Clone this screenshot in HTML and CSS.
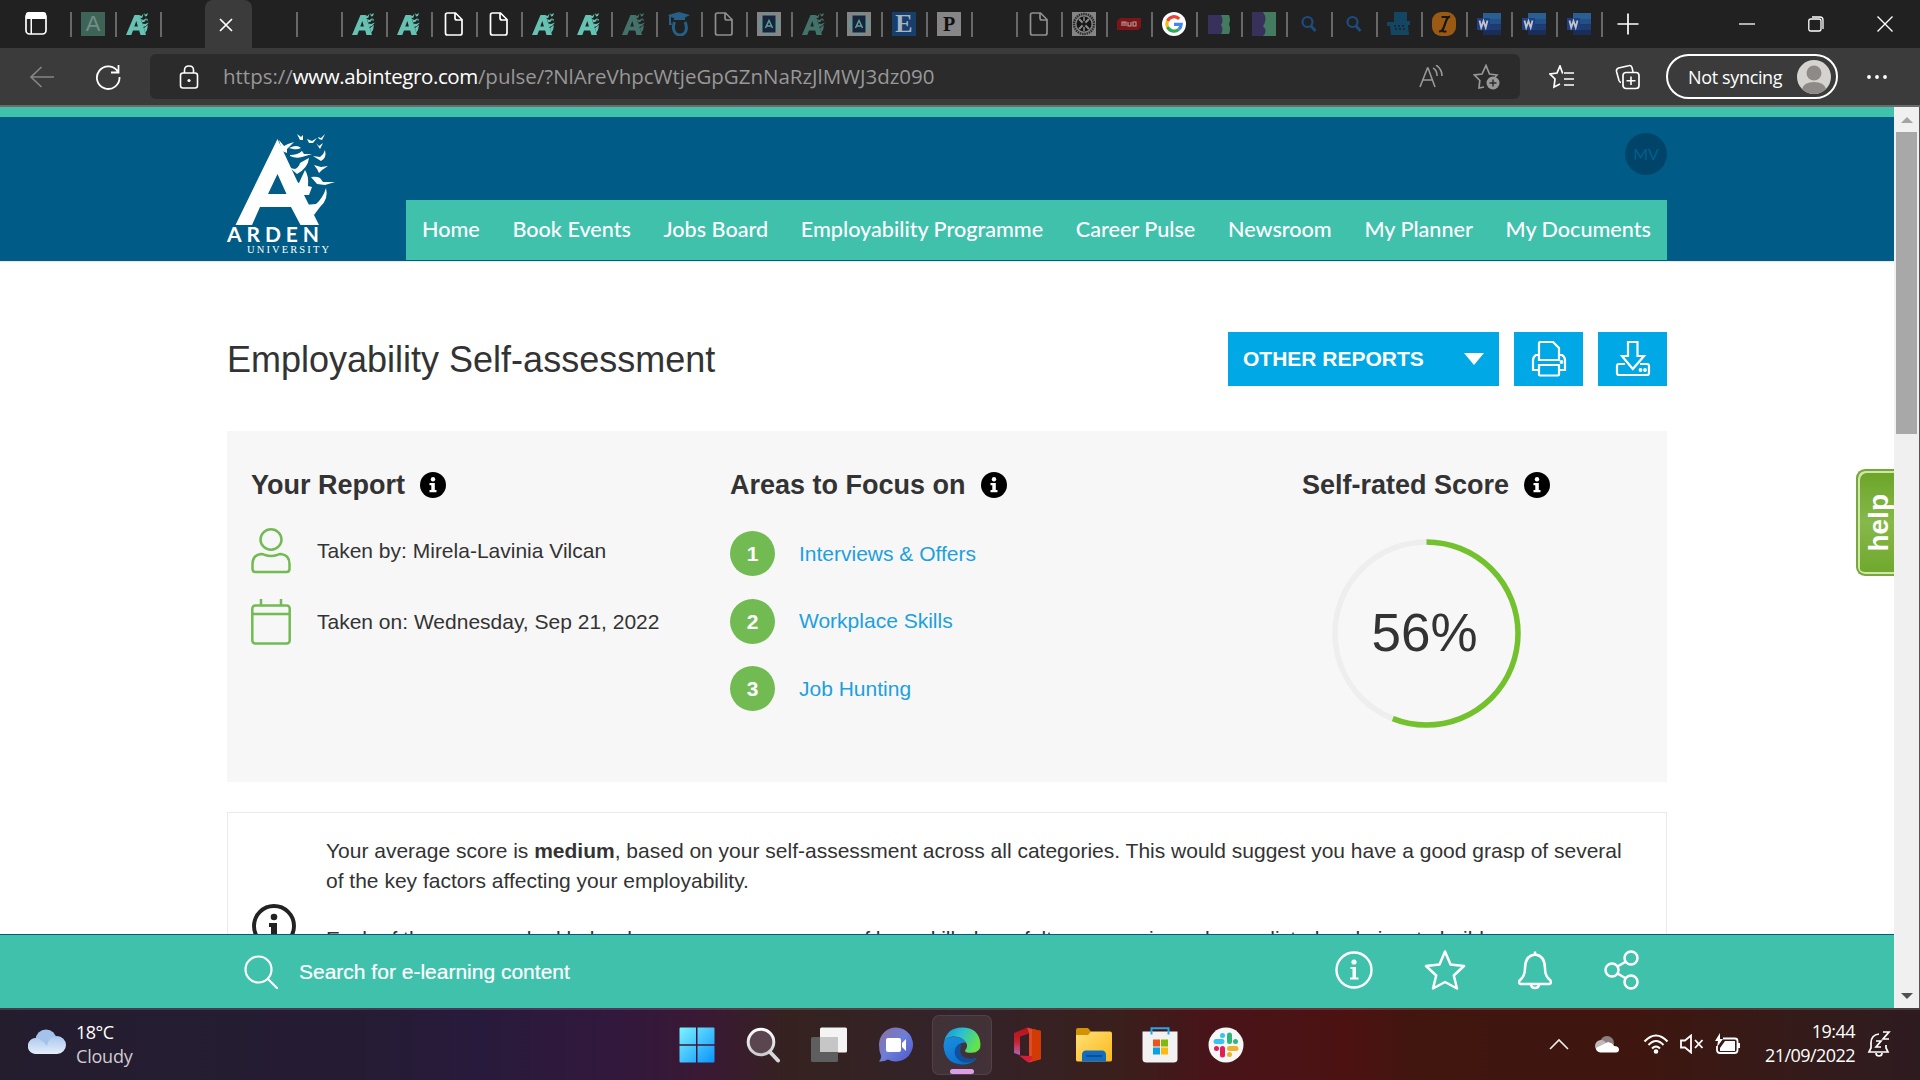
FILE: index.html
```html
<!DOCTYPE html>
<html lang="en">
<head>
<meta charset="utf-8">
<title>Employability Self-assessment</title>
<link rel="stylesheet" href="styles.css">
</head>
<body>
<svg class="defs" aria-hidden="true">
  <defs>
    <linearGradient id="gWin" x1="0" y1="0" x2="1" y2="1"><stop offset="0" stop-color="#7df3ff"/><stop offset="1" stop-color="#0a94ff"/></linearGradient>
    <linearGradient id="gLens" x1="0" y1="0" x2="0" y2="1"><stop offset="0" stop-color="#fff"/><stop offset="1" stop-color="#c9ccd0"/></linearGradient>
    <linearGradient id="gChat" x1="0" y1="0" x2="1" y2="1"><stop offset="0" stop-color="#8f6f9d"/><stop offset=".5" stop-color="#6c7fd8"/><stop offset="1" stop-color="#4f56d0"/></linearGradient>
    <linearGradient id="gEdge" x1="0" y1="0" x2="1" y2=".4"><stop offset="0" stop-color="#1592d8"/><stop offset=".5" stop-color="#2cc0d0"/><stop offset="1" stop-color="#62e34c"/></linearGradient>
    <linearGradient id="gEdge2" x1="0" y1="0" x2=".6" y2="1"><stop offset="0" stop-color="#1a8fdd"/><stop offset="1" stop-color="#0a6fd0"/></linearGradient>
    <linearGradient id="gOff" x1="0" y1="0" x2="0" y2="1"><stop offset="0" stop-color="#b5121c"/><stop offset=".5" stop-color="#c2222e"/><stop offset="1" stop-color="#b264b4"/></linearGradient>
    <linearGradient id="gFold" x1="0" y1="0" x2="1" y2="1"><stop offset="0" stop-color="#ffe07a"/><stop offset="1" stop-color="#fbb917"/></linearGradient>
    <linearGradient id="gCloud" x1="0" y1="0" x2="0" y2="1"><stop offset="0" stop-color="#a9c8ee"/><stop offset="1" stop-color="#e6edf8"/></linearGradient>
    <symbol id="arden" viewBox="0 0 24 24"><path d="M0 23 8.500 3h5L20 23h-5.500l-1.300-4.500H7L5.300 23zM8.300 14.500h3.600L10.300 9z" fill-rule="evenodd"/><path d="M13 3l2.500 1 2-2.500-1 4-2 1zm5-2 1.500 1.500L22 1l-1 3-2 .5zM15 7l2.500 1 3-2-1.500 3.500-3 1zM16 11.500l3 .5 4-1.500-3 3.500-3 1zM18 16l4-3-1 5-2 3zM20 6.500l2 1-1 2z"/></symbol>
    <symbol id="doc" viewBox="0 0 24 24"><path d="M5.500 1h8L20 7.500V21q0 2-2 2H5.500q-2 0-2-2V3q0-2 2-2zM13 1.500V6q0 2 2 2h4.500" fill="none" stroke="currentColor" stroke-width="1.700"/></symbol>
    <symbol id="book" viewBox="0 0 24 24"><path fill="#858585" d="M0 0h24v24H0z"/><circle cx="12" cy="12" r="10.500" fill="#6c9492"/><path fill="#17243c" d="M5.500 3.500h13v17h-13z"/><path d="M8.500 16l3.500-7.500 3.500 7.500M9.500 14h5" stroke="#5c9f98" stroke-width="1.500" fill="none"/></symbol>
    <symbol id="mag" viewBox="0 0 24 24"><circle cx="10.500" cy="10" r="5" fill="none" stroke="#1c4d80" stroke-width="2.200"/><path d="M14 14l4.500 5" stroke="#1c4d80" stroke-width="2.800"/></symbol>
    <symbol id="word" viewBox="0 0 24 24"><path fill="#2a5f92" d="M6 1h18v6H6z"/><path fill="#23508a" d="M6 7h18v5.500H6z"/><path fill="#1d3d72" d="M6 12.500h18V18H6z"/><path fill="#1a2d5a" d="M6 18h18v5H6z"/><path fill="#1c3f86" d="M0 6h13v12H0z"/><path d="M2.500 8.500l1.700 7L6.500 9l2.200 6.500 1.800-7" stroke="#c3c3c3" stroke-width="1.800" fill="none"/></symbol>
    <symbol id="info" viewBox="0 0 26 26"><circle cx="13" cy="13" r="13" fill="#000"/><circle cx="13" cy="7.300" r="2.200" fill="#fff"/><path fill="#fff" d="M9.500 11h5.300v7h1.700v2.200h-7V18h1.800v-4.800H9.500z"/></symbol>
  </defs>
</svg>

<header class="tabs">
  <div class="tab-menu"><svg width="24" height="30" viewBox="0 0 24 30"><rect x="2" y="4" width="20" height="21" rx="3.500" fill="none" stroke="#fff" stroke-width="1.700"/><path fill="#fff" d="M2 5q0-2 3-2h14q3 0 3 2v5H2zM6.500 9h1.500v16H6.500z"/></svg></div>
  <div class="tab"><span class="fav sq-a">A</span></div>
  <div class="tab"><svg class="fav teal"><use href="#arden"/></svg></div>
  <div class="tab"></div>
  <div class="tab active"><svg width="14" height="14" viewBox="0 0 14 14"><path d="M1 1l12 12M13 1L1 13" stroke="#fff" stroke-width="1.700"/></svg></div>
  <div class="tab bare"></div>
  <div class="tab"></div>
  <div class="tab"><svg class="fav teal"><use href="#arden"/></svg></div>
  <div class="tab"><svg class="fav teal"><use href="#arden"/></svg></div>
  <div class="tab"><svg class="fav white"><use href="#doc"/></svg></div>
  <div class="tab"><svg class="fav white"><use href="#doc"/></svg></div>
  <div class="tab"><svg class="fav teal"><use href="#arden"/></svg></div>
  <div class="tab"><svg class="fav teal"><use href="#arden"/></svg></div>
  <div class="tab"><svg class="fav teal dim"><use href="#arden"/></svg></div>
  <div class="tab"><svg class="fav" viewBox="0 0 24 24"><path fill="#275f86" d="M1 3l11-3 11 3-5 2.500V8H7V6L4 5v5l1 3H2V4z"/><path d="M7.500 10C5 16 7 23 13 23s8-7 5-13" fill="none" stroke="#245f88" stroke-width="3"/></svg></div>
  <div class="tab"><svg class="fav grey"><use href="#doc"/></svg></div>
  <div class="tab"><svg class="fav"><use href="#book"/></svg></div>
  <div class="tab"><svg class="fav teal dim"><use href="#arden"/></svg></div>
  <div class="tab"><svg class="fav"><use href="#book"/></svg></div>
  <div class="tab"><span class="fav sq-e">E</span></div>
  <div class="tab"><span class="fav sq-p">P</span></div>
  <div class="tab"></div>
  <div class="tab"><svg class="fav grey"><use href="#doc"/></svg></div>
  <div class="tab"><svg class="fav" viewBox="0 0 24 24"><path fill="#858585" d="M0 0h24v24H0z"/><circle cx="12" cy="12" r="10" fill="none" stroke="#2a2a2a" stroke-width="2.400" stroke-dasharray="1.500 .8"/><circle cx="12" cy="12" r="7.500" fill="#151515"/><path d="M7 7l10 10M17 7L7 17" stroke="#8a8a8a" stroke-width="2"/><path d="M12 5v4M12 15v4" stroke="#8a8a8a" stroke-width="1.500"/><circle cx="12" cy="12" r="2" fill="#151515"/></svg></div>
  <div class="tab"><svg class="fav" viewBox="0 0 24 24"><path fill="#7d1518" d="M3 6h21v9l-3 3H0V9z"/><path d="M5 14V10h4v4M7 10v4M11 10v4h3v-4M16 10h3v4h-3z" fill="none" stroke="#b0a0a0" stroke-width="1.100"/></svg></div>
  <div class="tab"><svg class="fav" viewBox="0 0 24 24"><circle cx="12" cy="12" r="12" fill="#fff"/><g fill="none" stroke-width="3.200"><path stroke="#ea4335" d="M5.500 9a7.200 7.200 0 0 1 11.700-2.200"/><path stroke="#fbbc05" d="M5.500 15a7.200 7.200 0 0 1 0-6"/><path stroke="#34a853" d="M16.800 17.400A7.200 7.200 0 0 1 5.500 15"/><path stroke="#4285f4" d="M12 12.300h7.200a7.200 7.200 0 0 1-2.400 5.100"/></g></svg></div>
  <div class="tab"><svg class="fav" viewBox="0 0 24 24"><path fill="#38315c" d="M1 3h15v19H1z"/><path fill="#437a60" d="M14 3h8q2 5 0 9 2 5 0 10h-8q3-5 0-9 3-4 0-10z"/></svg></div>
  <div class="tab"><svg class="fav" viewBox="0 0 24 24"><path fill="#38315c" d="M0 0h14v24H0z"/><path fill="#437a60" d="M11 0h13v24H11q5-5 0-10 5-7 0-14z"/></svg></div>
  <div class="tab"><svg class="fav"><use href="#mag"/></svg></div>
  <div class="tab"><svg class="fav"><use href="#mag"/></svg></div>
  <div class="tab"><svg class="fav" viewBox="0 0 24 24"><path fill="#134663" d="M7 0h13v9h3v4h-2l1 10H4l-1-9H0v-4h7z"/><path stroke="#202020" stroke-width="1.600" stroke-dasharray="2 2" d="M7 14h12M8 17h10"/></svg></div>
  <div class="tab"><svg class="fav" viewBox="0 0 24 24"><rect width="24" height="24" rx="9" fill="#9a5a14"/><path d="M7 19.500q3.500 0 4.500-3.500l3-8q1-3 3.500-3.500M9.500 5h6M10.500 19.500h4" fill="none" stroke="#161616" stroke-width="2.200"/></svg></div>
  <div class="tab"><svg class="fav"><use href="#word"/></svg></div>
  <div class="tab"><svg class="fav"><use href="#word"/></svg></div>
  <div class="tab"><svg class="fav"><use href="#word"/></svg></div>
  <div class="tab new-tab"><svg width="22" height="22" viewBox="0 0 22 22"><path d="M11 .5v21M.5 11h21" stroke="#fff" stroke-width="1.700"/></svg></div>
  <div class="win-buttons">
    <svg width="16" height="16" viewBox="0 0 16 16"><path d="M0 8h16" stroke="#fff" stroke-width="1.300"/></svg>
    <svg width="16" height="16" viewBox="0 0 16 16"><path d="M.8 5q0-2 2-2H11q2 0 2 2v8q0 2-2 2H2.800q-2 0-2-2zM4 1h8q3 0 3 3v9" fill="none" stroke="#fff" stroke-width="1.300"/></svg>
    <svg width="16" height="16" viewBox="0 0 16 16"><path d="M.5.5l15 15M15.500.5l-15 15" stroke="#fff" stroke-width="1.400"/></svg>
  </div>
</header>

<div class="toolbar">
  <svg class="back" width="26" height="24" viewBox="0 0 26 24"><path d="M25 12H2M12.500 2L2 12l10.500 10" fill="none" stroke="#858585" stroke-width="1.700"/></svg>
  <svg class="reload" width="26" height="26" viewBox="0 0 26 26"><path d="M23 8A11.300 11.300 0 1 0 24.500 13M23.500 1v7.500H16" fill="none" stroke="#fff" stroke-width="1.800"/></svg>
  <div class="address">
    <svg width="20" height="24" viewBox="0 0 20 24"><rect x="1.500" y="8" width="17" height="15" rx="2.500" fill="none" stroke="#fff" stroke-width="1.600"/><path d="M5.500 8V5q0-4 4.500-4t4.500 4v3" fill="none" stroke="#fff" stroke-width="1.600"/><circle cx="10" cy="15.500" r="1.600" fill="#fff"/></svg>
    <div class="url">https://<b>www.abintegro.com</b><span class="query">/pulse/?NlAreVhpcWtjeGpGZnNaRzJlMWJ3dz090</span></div>
    <svg class="read" width="26" height="24" viewBox="0 0 26 24"><path d="M1 22L8.500 3h.5l7 19M4 15h10M14 3q4 2 4 8M17 0q6 4 6 11" fill="none" stroke="#989898" stroke-width="1.600"/></svg>
    <svg width="28" height="26" viewBox="0 0 28 26"><path d="M11 23l-5 1 .8-7.500L1.500 11l7.500-1L13 1.500 16.500 10l7.500 1-2 2" fill="none" stroke="#989898" stroke-width="1.700"/><circle cx="20" cy="19" r="6.500" fill="#989898"/><path d="M20 15.500v7M16.500 19h7" stroke="#2b2b2b" stroke-width="1.400"/></svg>
  </div>
  <svg class="favs" width="26" height="24" viewBox="0 0 26 24"><path d="M14 8h-.5L11 1 8 8l-7 1 5 5-1 8 6-3M15 8h10M15 14h10M15 20h10" fill="none" stroke="#fff" stroke-width="1.700"/></svg>
  <svg class="coll" width="26" height="26" viewBox="0 0 26 26"><rect x="8" y="8.500" width="16" height="16" rx="3" fill="none" stroke="#fff" stroke-width="1.700"/><path d="M16 12.500v8.500M11.500 16.700h9M18 8l-1-4.500Q16 1 13.500 1.700L3.500 4Q1 5 1.500 7.500l2.500 9q.5 1.500 2 2" fill="none" stroke="#fff" stroke-width="1.600"/></svg>
  <div class="profile"><span>Not syncing</span><svg width="34" height="34" viewBox="0 0 34 34"><circle cx="17" cy="17" r="17" fill="#d5d3d0"/><circle cx="17" cy="13" r="7.500" fill="#8e8a87"/><path fill="#8e8a87" d="M5 29q2-7 12-7t12 7q-5 5-12 5T5 29z"/></svg></div>
  <svg class="dots" width="22" height="6" viewBox="0 0 22 6" fill="#fff"><circle cx="3" cy="3" r="1.900"/><circle cx="11" cy="3" r="1.900"/><circle cx="19" cy="3" r="1.900"/></svg>
</div>

<div class="viewport">
  <div class="page">
    <div class="masthead">
      <div class="masthead-inner">
        <svg class="logo" width="130" height="135" viewBox="0 0 130 135" fill="#fff">
          <path fill-rule="evenodd" d="M62.500 14L20.500 100H37l8-18h31l9.500 18h18.500L84 60zM62.500 49L53 69h18.500z"/>
          <path d="M64 15l5 6 4-2 6-2-7 7 0 4-5-2zM74 23q8-4 12 0-4 2-8 1zM82 9l4 3 2-2 0 5-3 0zM92 14l5 2 5-3-4 5-4 0zM103 12l3 1 4-4-3 6-3-1zM101 18l3 3 4-3-3 6zM75 30q8 0 12-4l2 3 8 0-10 3q-6 2-12-1zM110 25q2 8-4 11l-8-5 7 1q4-3 5-7zM94 33q-1 10-12 16l-7-6 5 1q4-2 5-6 5-3 9-5zM99 40l7 2 7-1-6 4-3 3-2-4zM90 45q4 6 3 16l4 1-3 8-9 0-6-14 5 2zM96 52q6-1 9 1l3 4 12 0-10 3-8-1zM111 63q3 11-6 19l-6 8-9-10 11-1q7-6 10-16z"/>
          <text x="12" y="117" class="logo-a" textLength="92">ARDEN</text>
          <text x="32" y="128" class="logo-u" textLength="82">UNIVERSITY</text>
        </svg>
        <div class="masthead-right">
          <div class="initials">MV</div>
          <nav>
            <a>Home</a><a>Book Events</a><a>Jobs Board</a><a>Employability Programme</a><a>Career Pulse</a><a>Newsroom</a><a>My Planner</a><a>My Documents</a>
          </nav>
        </div>
      </div>
    </div>
    <main>
      <div class="title-row">
        <h1>Employability Self-assessment</h1>
        <div class="btn reports">OTHER REPORTS<i class="caret"></i></div>
        <div class="btn"><svg width="36" height="36" viewBox="0 0 36 36" fill="none" stroke="#fff" stroke-width="2.200"><path d="M8 19V2.500Q8 1 9.500 1H22l6 6v12zM8 14H5q-3 2-3 5v10h6M28 14h3q3 2 3 5v10h-6M8 24h20v9.500q0 1-1 1H9q-1 0-1-1z"/><circle cx="30.500" cy="21" r=".8"/></svg></div>
        <div class="btn"><svg width="36" height="36" viewBox="0 0 36 36" fill="none" stroke="#fff" stroke-width="2.200"><path d="M13 1h9.500v14h6.500L17.800 28 7 15h6zM10 23H4q-2 0-2 2v7q0 2 2 2h28q2 0 2-2v-7q0-2-2-2h-7"/><circle cx="25.500" cy="29" r=".8"/><circle cx="30" cy="29" r=".8"/></svg></div>
      </div>
      <section class="summary">
        <div class="col-report">
          <h2>Your Report <svg width="26" height="26"><use href="#info"/></svg></h2>
          <div class="fact"><svg width="40" height="46" viewBox="0 0 40 46" fill="none" stroke="#72bb53" stroke-width="2.500"><ellipse cx="20" cy="11.500" rx="10.500" ry="10.200"/><path d="M1.500 41V36Q1.500 27 10 26q2 0 4 1 6 2 12 0 2-1 4-1 8.500 1 8.500 10v5q0 3-3 3h-31q-3 0-3-3z"/></svg><span>Taken by: Mirela-Lavinia Vilcan</span></div>
          <div class="fact"><svg width="40" height="46" viewBox="0 0 40 46" fill="none" stroke="#72bb53" stroke-width="2.500"><rect x="1.300" y="6.500" width="37.400" height="38" rx="3"/><path d="M1 15h38M10 0v6M30 0v6"/></svg><span class="low">Taken on: Wednesday, Sep 21, 2022</span></div>
        </div>
        <div class="col-focus">
          <h2>Areas to Focus on <svg width="26" height="26"><use href="#info"/></svg></h2>
          <div class="focus"><b>1</b><a>Interviews &amp; Offers</a></div>
          <div class="focus"><b>2</b><a>Workplace Skills</a></div>
          <div class="focus"><b>3</b><a>Job Hunting</a></div>
        </div>
        <div class="col-score">
          <h2>Self-rated Score <svg width="26" height="26"><use href="#info"/></svg></h2>
          <svg class="dial" width="190" height="190" viewBox="0 0 190 190"><circle cx="95.500" cy="95.500" r="91.500" fill="none" stroke="#eee" stroke-width="5.500"/><circle cx="95.500" cy="95.500" r="91.500" fill="none" stroke="#73c22d" stroke-width="5.500" pathLength="100" stroke-dasharray="56 100" transform="rotate(-90 95.500 95.500)"/><text x="93.500" y="113" text-anchor="middle">56%</text></svg>
        </div>
      </section>
      <section class="details">
        <svg class="ring" width="44" height="44" viewBox="0 0 44 44"><circle cx="22" cy="22" r="20" fill="none" stroke="#222" stroke-width="3.900"/><circle cx="22" cy="13" r="3.300" fill="#222"/><path fill="#222" d="M17 19h8v13h3v3H16v-3h3v-9h-2z"/></svg>
        <div class="prose">
          <p>Your average score is <b>medium</b>, based on your self-assessment across all categories. This would suggest you have a good grasp of several of the key factors affecting your employability.</p>
          <p>Each of the areas ranked below has your average score of how skilled you felt you were in each area listed and aims to build.</p>
        </div>
      </section>
    </main>
    <div class="searchbar">
      <svg width="34" height="34" viewBox="0 0 34 34" fill="none" stroke="#fff" stroke-width="2.200" stroke-linecap="round"><circle cx="14.500" cy="14.500" r="13"/><path d="M24 24l9 9"/></svg>
      <span>Search for e-learning content</span>
      <div class="actions">
        <svg width="38" height="38" viewBox="0 0 38 38"><circle cx="19" cy="19" r="17.500" fill="none" stroke="#fff" stroke-width="2.400"/><circle cx="19" cy="11" r="2.600" fill="#fff"/><path fill="#fff" d="M15.500 16h5.500v10.500h2.500V28.500h-8.500V26.500h2.500V18h-2z"/></svg>
        <svg width="42" height="40" viewBox="0 0 42 40"><path d="M21 1.500l5.500 13L40 16 29.800 25.500 33 38.500 21 32 9 38.500l3.200-13L2 16l13.500-1.500z" fill="none" stroke="#fff" stroke-width="2.500" stroke-linejoin="round"/></svg>
        <svg width="36" height="40" viewBox="0 0 36 40" fill="none" stroke="#fff" stroke-width="2.500"><path d="M18 4.500q-10 1-10 14 0 8-5.500 12-1 3 1 3.500h29q2-.5 1-3.500-5.500-4-5.500-12 0-13-10-14zM14 34q0 4 4 4t4-4M18 1.500V5"/></svg>
        <svg width="36" height="40" viewBox="0 0 36 40" fill="none" stroke="#fff" stroke-width="2.500"><circle cx="8" cy="20" r="6.500"/><circle cx="27" cy="8" r="6.500"/><circle cx="27" cy="32" r="6.500"/><path d="M13.500 16.500l8.500-5M13.500 23.500l8.500 5"/></svg>
      </div>
    </div>
    <div class="help"><span>help</span></div>
  </div>
  <div class="scrollbar">
    <i class="up"></i>
    <div class="thumb"></div>
    <i class="down"></i>
  </div>
</div>

<footer class="taskbar">
  <div class="weather">
    <svg width="38" height="26" viewBox="0 0 38 26"><circle cx="18" cy="11" r="10.500" fill="#a4c2ea"/><path fill="url(#gCloud)" d="M8 25a8 8 0 1 1 6-13q3 2 5 5 2-10 10-10a9 9 0 0 1 0 18z"/></svg>
    <div class="weather-text"><div>18°C</div><div class="sky">Cloudy</div></div>
  </div>
  <div class="apps">
    <div class="app"><svg width="36" height="36" viewBox="0 0 36 36"><path fill="url(#gWin)" d="M1.500.5H17V17.300H.5V1.500q0-1 1-1zM18.500.5h16q1 0 1 1v15.800h-17zM.5 18.700H17v16.800H1.500q-1 0-1-1zM18.500 18.700h17v15.800q0 1-1 1h-16z"/></svg></div>
    <div class="app"><svg width="36" height="36" viewBox="0 0 36 36"><circle cx="16" cy="15" r="12.800" fill="#5b4650" stroke="url(#gLens)" stroke-width="3"/><path d="M25 25l8 8.500" stroke="#d5d8da" stroke-width="4" stroke-linecap="round"/></svg></div>
    <div class="app"><svg width="36" height="36" viewBox="0 0 36 36"><rect x="9" y=".5" width="27" height="25" rx="1.500" fill="#f4f4f4"/><rect y="10" width="27" height="25" rx="1.500" fill="#5e5e5e"/><path fill="#c6c6c6" d="M9 10h18v15H9z"/></svg></div>
    <div class="app"><svg width="36" height="36" viewBox="0 0 36 36"><path fill="url(#gChat)" d="M18 .5a17 17 0 1 1-8 32q-4 2.500-9 2 2.500-2.500 2-6Q1 24 1 17.500A17 17 0 0 1 18 .5z"/><rect x="8" y="11" width="15" height="14" rx="2" fill="#fff"/><path fill="#fff" d="M24 16l4-4v12l-4-4z"/></svg></div>
    <div class="app current"><svg width="38" height="38" viewBox="0 0 36 36"><path fill="url(#gEdge2)" d="M.5 18Q0 10 9 9.500q9-.5 13 5l-5 1q-4 3-2 9 3 8 17 5-5 6-14 6Q2 35 .500 18z"/><path fill="#124f9c" d="M15 16q-6 5-3 12 5 8 15 5 3-1 5-4-9 3-14-2-3-4-.5-10z"/><path fill="url(#gEdge)" d="M1 14Q4 .5 18 .5q16 0 17.500 15.500Q36 24 27 24.500q-7 0-6-2.500 3-3 1-7-4-6.500-13-6Q3 10 1 14z"/></svg></div>
    <div class="app"><svg width="36" height="36" viewBox="0 0 36 36"><path fill="url(#gOff)" d="M17 .5L4 6v20l6 2V9.500l9-3z"/><path fill="#e2492a" d="M17 .5L31 4v28l-12 3.500V6.500z"/><path fill="#d23a06" d="M22 2l9 2v28l-9 2.500z"/><path fill="#d81e36" d="M9 28.500l10 .5h3v4l-4 2.500z"/></svg></div>
    <div class="app"><svg width="36" height="36" viewBox="0 0 36 36"><path fill="#d29204" d="M0 3q0-2 2-2h10l3 3.500V12H0z"/><path fill="url(#gFold)" d="M0 8h12l3-3.500h19q2 0 2 2V33q0 1.500-2 1.500H2Q0 34.500 0 33z"/><path fill="#106cc0" d="M6 34.500V28q0-4.500 4-4.500h16q4 0 4 4.500v6.500z"/><path fill="#0b4d97" d="M10 28h16v2H10z"/></svg></div>
    <div class="app"><svg width="36" height="36" viewBox="0 0 36 36"><path d="M9.500 7V1.300h17V7" fill="none" stroke="#27a5e8" stroke-width="2"/><path fill="#f2f2f2" d="M.5 4.500h35V32q0 3.500-4 3.500h-27q-4 0-4-3.500z"/><path fill="#f1511b" d="M11 12.500h7v7h-7z"/><path fill="#80bb0a" d="M19 12.500h7v7h-7z"/><path fill="#04a2e9" d="M11 20.500h7v7h-7z"/><path fill="#fdb813" d="M19 20.500h7v7h-7z"/><path d="M9.500 4v3.500M26.500 4v3.500" stroke="#27a5e8" stroke-width="2"/></svg></div>
    <div class="app"><svg width="36" height="36" viewBox="0 0 36 36"><circle cx="18" cy="18" r="17.500" fill="#f7f7f7"/><g stroke-width="5" stroke-linecap="round"><path stroke="#36c5f0" d="M8 14.500h6M14.500 8.500v0"/><path stroke="#2eb67d" d="M21.500 8v6.500M27.500 14.500v0"/><path stroke="#e01e5a" d="M14.500 21.500V28M8.500 21.500v0"/><path stroke="#ecb22e" d="M21.500 21.500H28M21.500 27.500v0"/></g></svg></div>
  </div>
  <div class="tray">
    <svg class="chev" width="20" height="12" viewBox="0 0 20 12"><path d="M1 11l9-9 9 9" fill="none" stroke="#eee" stroke-width="1.600"/></svg>
    <svg class="cloud" width="26" height="18" viewBox="0 0 26 18"><circle cx="13" cy="8" r="7" fill="#8d7f7d"/><circle cx="7" cy="11" r="6" fill="#c2bab9"/><path fill="#fff" d="M6 17.500q-4-1-4-4.500l12-6q5 1 6 4 5 0 5 3.500T21 17.500z"/></svg>
    <svg class="wifi" width="26" height="20" viewBox="0 0 26 20" fill="none" stroke="#fff" stroke-width="2"><path d="M1.500 7.500q11.500-12 23 0M5.500 11q7.500-8 15 0M9 14.500q4-4 8 0"/><circle cx="13" cy="17.500" r="1.300" fill="#fff"/></svg>
    <svg class="snd" width="24" height="20" viewBox="0 0 24 20" fill="none" stroke="#fff" stroke-width="1.800"><path d="M1 6.500h4L11 1.500v17l-6-5H1zM15 6l7.500 8M22.500 6L15 14"/></svg>
    <svg class="bat" width="26" height="22" viewBox="0 0 26 22"><path d="M8 5.500h12q2.500 0 2.500 2.500v9q0 3-3 3H5q-3 0-3-3v-4" fill="none" stroke="#fff" stroke-width="1.800"/><path fill="#fff" d="M23 10h2v5h-2zM10 8h10v10H5v-3zM5 0L0 8h3l-1 6 6-8H5z"/></svg>
    <div class="clock"><div>19:44</div><div>21/09/2022</div></div>
    <svg class="dnd" width="24" height="26" viewBox="0 0 24 26" fill="none" stroke="#fff" stroke-width="1.700"><path d="M12 3Q4 4 4 12v5l-2 4h19l-2-4v-3M9 22q0 3 3 3t3-3M9 10h5l-5 6h5M16 1h6l-6 7h6"/></svg>
  </div>
</footer>
</body>
</html>
```
FILE: styles.css
```css
* { box-sizing: border-box; }
body {
  margin: 0;
  width: 1920px;
  height: 1080px;
  overflow: hidden;
  display: flex;
  flex-direction: column;
  font-family: "Liberation Sans", Arial, sans-serif;
  font-size: 21px;
  line-height: 30px;
  color: #333;
  background: #fff;
}
svg { display: block; flex: none; }
.defs { position: absolute; width: 0; height: 0; }

/* tab strip */
.tabs { height: 48px; flex: none; display: flex; background: #212121; }
.tab-menu { width: 70px; padding: 9px 0 0 24px; }
.tab { width: 45px; height: 48px; padding: 12px 0 0 11px; background: linear-gradient(#686868, #686868) 0 12px / 2px 25px no-repeat; }
.tab.bare { background: none; }
.tab.active { background: #3b3b3b; border-radius: 8px 8px 0 0; width: 47px; margin-right: -1px; padding: 18px 0 0 14px; }
.fav { display: block; width: 24px; height: 24px; text-align: center; line-height: 24px; }
.teal { fill: #66c3b4; }
.dim { opacity: .5; }
.white { color: #fff; }
.grey { color: #8f8f8f; }
.sq-a { background: #3e6457; color: #718f84; font-size: 22px; }
.sq-e { background: #173f6e; color: #a5b3c2; font: bold 26px/24px "Liberation Serif", serif; }
.sq-p { background: #868686; color: #111; font: bold 20px/24px "Liberation Serif", serif; }
.new-tab { width: 60px; padding: 13px 0 0 16px; }
.win-buttons { flex: 1; display: flex; justify-content: flex-end; gap: 53px; padding: 16px 27px 0 0; }

/* toolbar */
.toolbar {
  height: 59px;
  flex: none;
  display: flex;
  align-items: center;
  background: #3b3b3b;
  border-bottom: 2px solid #6a6a6a;
  padding-left: 29px;
}
.reload { margin-left: 40px; }
.address {
  margin-left: 29px;
  width: 1370px;
  height: 45px;
  border-radius: 6px;
  background: #2b2b2b;
  display: flex;
  align-items: center;
  padding: 0 19px 0 29px;
}
.url { margin-left: 24px; flex: 1; font: 20.5px/30px "Open Sans", "Noto Sans", sans-serif; letter-spacing: -.02px; padding-bottom: 2px; color: #989898; white-space: nowrap; }
.url b { font-weight: 400; color: #fff; letter-spacing: -.4px; }
.read { margin-right: 28px; }
.favs { margin-left: 29px; }
.coll { margin-left: 40px; }
.profile {
  margin-left: 25px;
  width: 172px;
  height: 45px;
  border: 2px solid #fff;
  border-radius: 23px;
  display: flex;
  align-items: center;
  justify-content: space-between;
  padding: 0 5px 0 20px;
  color: #fff;
  font: 18px/30px "Open Sans", sans-serif;
  letter-spacing: -.35px;
  white-space: nowrap;
}
.dots { margin-left: 28px; }

/* page */
.viewport { height: 901px; flex: none; display: flex; }
.page { width: 1894px; display: flex; flex-direction: column; position: relative; }
.masthead { height: 155px; flex: none; background: #005c86; border-top: 10px solid #40c1ac; border-bottom: 1px solid #e3eaee; }
.masthead-inner { width: 1440px; margin-left: 227px; display: flex; justify-content: space-between; }
.logo { margin: 8px 0 0 -12px; }
.logo-a { font: bold 21px "Lato", sans-serif; }
.logo-u { font: 10.500px "Liberation Serif", serif; }
.masthead-right { display: flex; flex-direction: column; align-items: flex-end; padding-top: 16px; }
.initials { width: 42px; height: 42px; border-radius: 50%; background: #004469; color: #005f8c; font: 16px/42px "Lato", sans-serif; text-align: center; }
nav { margin-top: 25px; width: 1261px; height: 60px; background: #40c1ac; display: flex; justify-content: space-between; padding: 0 16px; color: #fff; font: 500 21.600px/59px "Lato", sans-serif; white-space: nowrap; }

main { width: 1440px; margin-left: 227px; flex: 1; min-height: 0; overflow: hidden; padding-top: 70px; }
.title-row { display: flex; gap: 15px; height: 54px; }
h1 { flex: 1; margin: 0; font-size: 36px; font-weight: 400; line-height: 56px; }
.btn { width: 69px; background: #00a9e6; display: flex; align-items: center; justify-content: center; color: #fff; font-weight: 700; }
.reports { width: 271px; justify-content: space-between; padding: 0 15px; }
.caret { border: 10px solid transparent; border-top: 12px solid #fff; border-bottom: 0; }

.summary { margin-top: 45px; height: 351px; background: #f7f7f7; display: flex; padding: 39px 24px 0; }
h2 { margin: 0; display: flex; align-items: center; gap: 15px; font-size: 27px; line-height: 32px; height: 30px; white-space: nowrap; }
.col-report { width: 479px; }
.fact { display: flex; height: 46px; line-height: 46px; margin-top: 25px; gap: 26px; }
.low { line-height: 45px; }
.fact span { white-space: nowrap; }
h2 + .fact { margin-top: 28px; }
.col-focus { width: 479px; }
.focus { display: flex; align-items: center; gap: 24px; height: 45px; margin-top: 22.500px; color: #1d9fe0; }
h2 + .focus { margin-top: 31px; }
.focus b { width: 45px; height: 45px; border-radius: 50%; background: #72bb53; color: #fff; text-align: center; line-height: 46px; }
.col-score { flex: 1; display: flex; flex-direction: column; align-items: center; }
.dial { margin-top: 38px; }
.dial text { font-size: 53px; fill: #333; }

.details { margin-top: 30px; height: 250px; border: 1px solid #eaeaea; display: flex; padding: 23px 24px 0; }
.ring { margin-top: 68px; }
.prose { margin-left: 30px; width: 1320px; }
.prose p { margin: 0 0 28px; }
.details p + p { white-space: nowrap; }

.searchbar { height: 74px; flex: none; background: #40c1ac; border-top: 1px solid #005c86; display: flex; align-items: center; padding: 1px 254px 0 244px; color: #fff; position: relative; }
.searchbar span { margin-left: 21px; flex: 1; -webkit-text-stroke: .2px #fff; }
.actions { display: flex; gap: 51px; align-items: center; padding-bottom: 4px; }

.help {
  position: absolute;
  right: 0;
  top: 362px;
  width: 38px;
  height: 107px;
  border: 2px solid #79a83a;
  border-right: 0;
  border-radius: 9px 0 0 9px;
  background: linear-gradient(#6ba528, #86b84a 50%, #6fa82c);
  box-shadow: inset 2px 2px 0 #cfe6ad, inset 0 -2px 0 #cfe6ad;
  display: flex;
  align-items: center;
  justify-content: center;
  padding-left: 5px;
}
.help span { writing-mode: vertical-rl; transform: rotate(180deg); color: #fff; font-weight: 700; font-size: 28px; line-height: 34px; }

.scrollbar { width: 26px; background: #f0f0f0; border-right: 1px solid #555; display: flex; flex-direction: column; align-items: center; }
.up { margin-top: 10px; border: 6px solid transparent; border-bottom: 6px solid #a3a3a3; border-top: 0; }
.thumb { margin-top: 9px; width: 21px; height: 302px; background: #a8a8a8; }
.down { margin: auto 0 9px; border: 6px solid transparent; border-top: 6px solid #505050; border-bottom: 0; }

/* taskbar */
.taskbar {
  height: 72px;
  flex: none;
  display: flex;
  align-items: center;
  border-top: 2px solid rgba(255, 255, 255, .14);
  background: linear-gradient(90deg, #241d2e 0, #251c34 360px, #281a3c 480px, #33183c 630px, #3a1933 710px, #352220 790px, #33232a 960px, #3a1f1c 1120px, #481419 1210px, #4c1212 1350px, #40160f 1420px, #3e160f 1640px, #341b1a 1800px, #2e1b20 1920px);
  color: #fff;
  font: 18px/24px "Open Sans", sans-serif;
  letter-spacing: -.5px;
}
.weather { width: 664px; padding-left: 28px; display: flex; align-items: center; gap: 10px; }
.weather svg { margin-top: -6px; }
.weather-text, .clock { padding-bottom: 3px; }
.sky { color: #cfccd2; letter-spacing: -.2px; }
.apps { display: flex; padding-bottom: 1px; }
.app { width: 66.200px; height: 60px; display: flex; align-items: center; justify-content: center; }
.current { width: 60px; margin: 0 3px; background: rgba(255, 255, 255, .07); border: 1px solid rgba(255, 255, 255, .08); border-radius: 7px; flex-direction: column; padding-top: 11px; }
.current::after { content: ""; flex: none; width: 24px; height: 5px; margin-top: 4px; border-radius: 3px; background: #dc9fe6; }
.tray { flex: 1; display: flex; align-items: center; justify-content: flex-end; padding: 0 29px 2px 0; }
.cloud { margin-left: 25px; }
.wifi { margin-left: 23px; }
.snd { margin-left: 11px; }
.bat { margin-left: 11px; }
.clock { width: 114px; text-align: right; letter-spacing: -.55px; }
.dnd { margin-left: 12px; }
```
